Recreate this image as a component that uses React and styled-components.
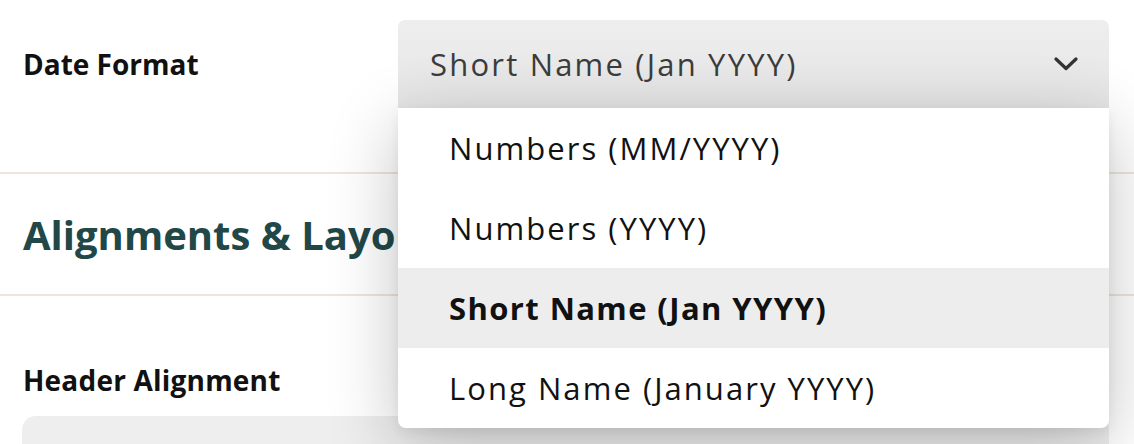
import React from "react";
import styled, { createGlobalStyle } from "styled-components";

const GlobalStyle = createGlobalStyle`
  html, body {
    margin: 0;
    padding: 0;
    background: #ffffff;
  }
  body {
    font-family: "Open Sans", "Noto Sans", sans-serif;
    color: #111;
    -webkit-font-smoothing: antialiased;
  }
`;

const Page = styled.div`
  width: 1134px;
  height: 444px;
  overflow: hidden;
  position: relative;
`;

const FieldRow = styled.div`
  display: flex;
  align-items: center;
  padding: 20px 25px 64px 23px;
`;

const Label = styled.div`
  width: 375px;
  flex: none;
  font-size: 28px;
  line-height: 38px;
  font-weight: 700;
  color: #111;
`;

const SelectWrap = styled.div`
  position: relative;
  flex: 1;
`;

const SelectButton = styled.div`
  height: 88px;
  box-sizing: border-box;
  display: flex;
  align-items: center;
  justify-content: space-between;
  padding: 0 31px 0 32px;
  border-radius: 7px 7px 0 0;
  background: linear-gradient(#eeeeee, #e5e5e5);
  font-size: 31px;
  letter-spacing: 2.2px;
  color: #3c3c3c;
`;

const Menu = styled.ul`
  position: absolute;
  top: 100%;
  left: 0;
  right: 0;
  margin: 0;
  padding: 0;
  list-style: none;
  background: #fff;
  border-radius: 0 0 8px 8px;
  box-shadow: 0 18px 70px rgba(0, 0, 0, 0.24), 0 4px 12px rgba(0, 0, 0, 0.06);
  overflow: hidden;
  z-index: 2;
`;

const MenuItem = styled.li`
  height: 80px;
  display: flex;
  align-items: center;
  padding-left: 51px;
  font-size: 31px;
  letter-spacing: ${(p) => (p.$active ? "1.4px" : "2.05px")};
  color: #111;
  font-weight: ${(p) => (p.$active ? 700 : 400)};
  background: ${(p) => (p.$active ? "#ededed" : "transparent")};
`;

const Divider = styled.hr`
  margin: 0;
  border: 0;
  height: 2px;
  background: #eee6dd;
`;

const SectionHead = styled.h2`
  margin: 0;
  height: 120px;
  display: flex;
  align-items: center;
  padding-left: 23px;
  font-size: 40px;
  font-weight: 700;
  color: #224747;
  white-space: nowrap;
`;

const Field = styled.div`
  padding: 65px 25px 0 22px;
`;

const FieldLabel = styled(Label)`
  width: auto;
  padding-left: 1px;
  margin-bottom: 17px;
  letter-spacing: 0.2px;
`;

const GrayBox = styled.div`
  height: 80px;
  border-radius: 14px;
  background: #eeeeee;
`;

const Chevron = () => (
  <svg width="24" height="14" viewBox="0 0 24 14" fill="none">
    <polyline
      points="2,2 12,11.5 22,2"
      stroke="#333"
      strokeWidth="3.2"
      strokeLinecap="round"
      strokeLinejoin="round"
    />
  </svg>
);

const options = [
  "Numbers (MM/YYYY)",
  "Numbers (YYYY)",
  "Short Name (Jan YYYY)",
  "Long Name (January YYYY)",
];

export default function App() {
  const selected = "Short Name (Jan YYYY)";
  return (
    <Page>
      <GlobalStyle />
      <FieldRow>
        <Label>Date Format</Label>
        <SelectWrap>
          <SelectButton>
            <span>{selected}</span>
            <Chevron />
          </SelectButton>
          <Menu>
            {options.map((o) => (
              <MenuItem key={o} $active={o === selected}>
                {o}
              </MenuItem>
            ))}
          </Menu>
        </SelectWrap>
      </FieldRow>
      <Divider />
      <SectionHead>Alignments &amp; Layout</SectionHead>
      <Divider />
      <Field>
        <FieldLabel>Header Alignment</FieldLabel>
        <GrayBox />
      </Field>
    </Page>
  );
}
